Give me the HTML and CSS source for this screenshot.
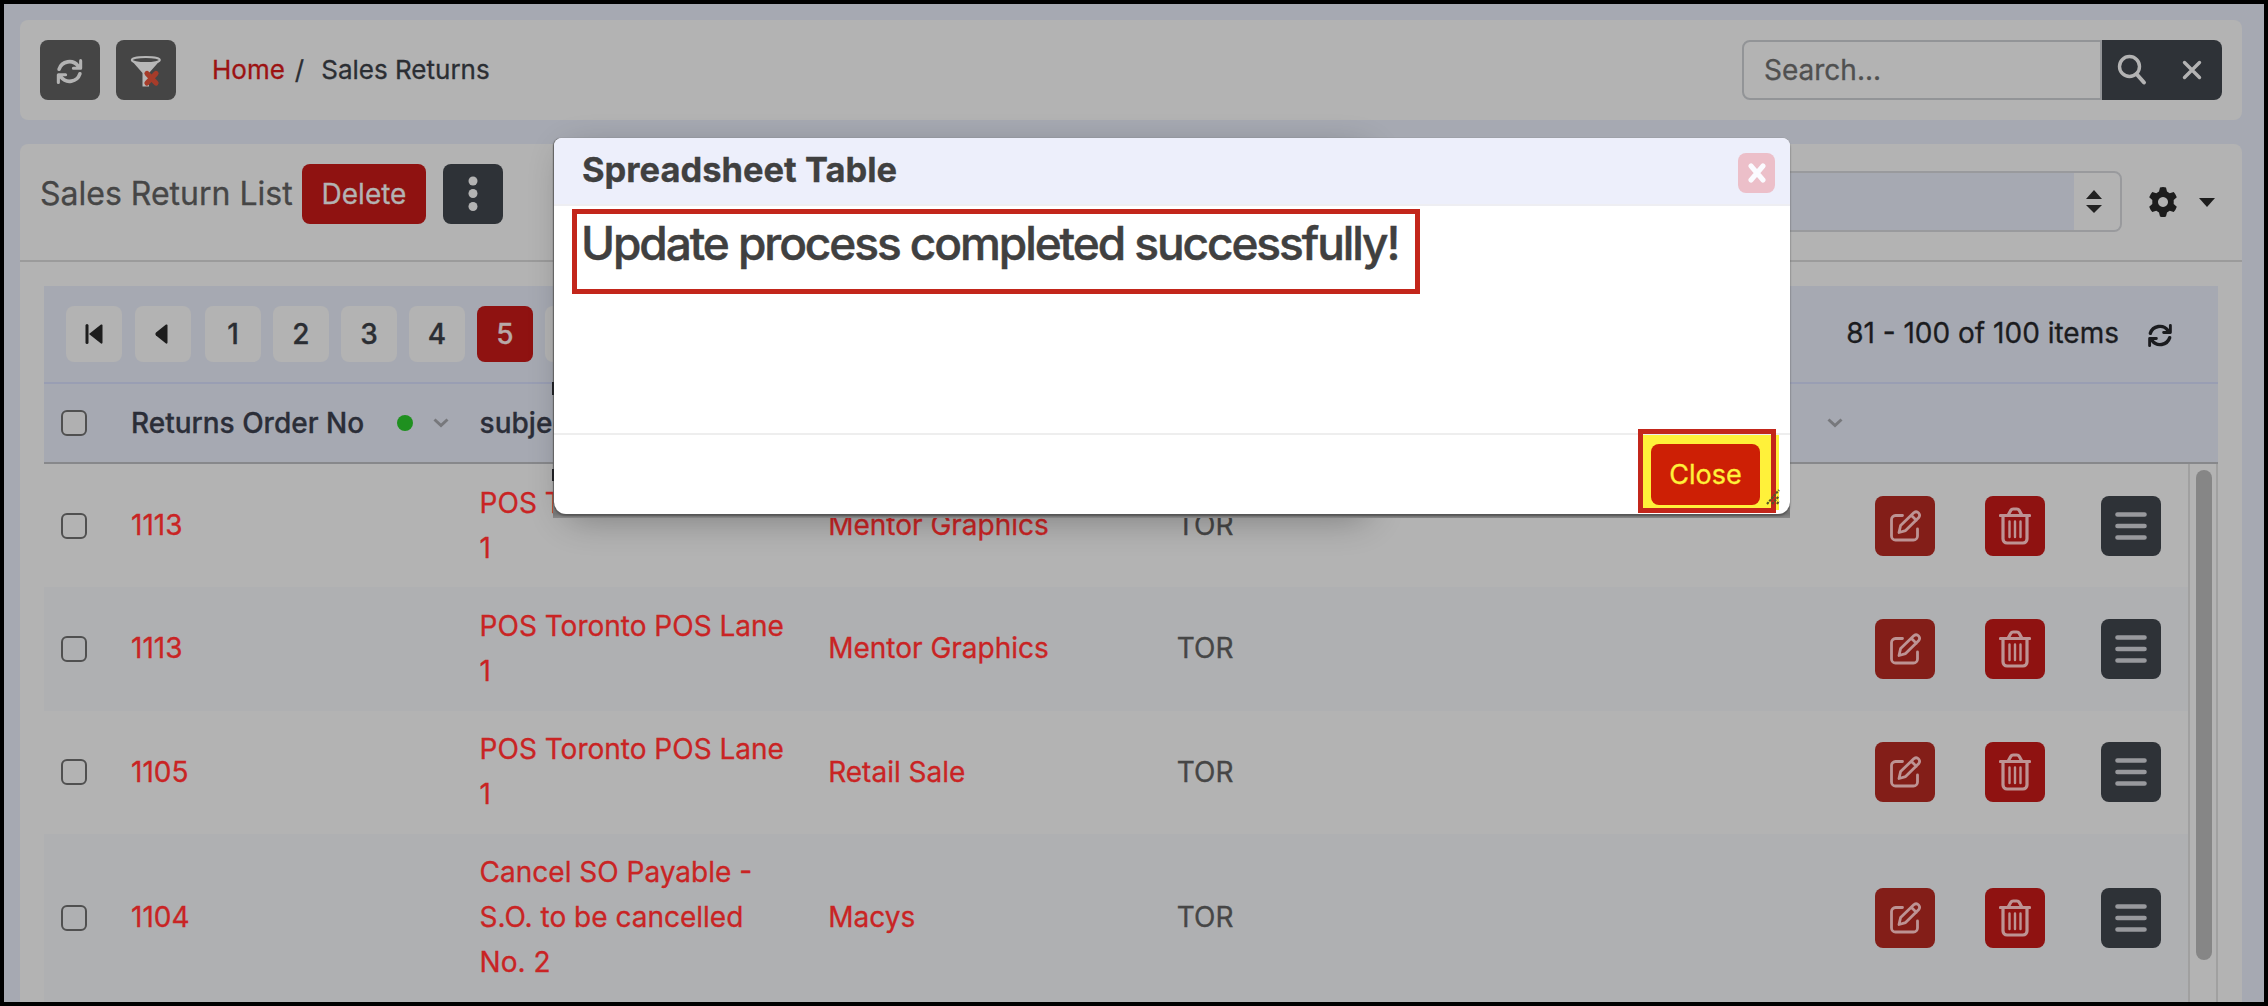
FILE: index.html
```html
<!DOCTYPE html>
<html lang="en">
<head>
<meta charset="utf-8">
<title>Sales Returns</title>
<link rel="stylesheet" href="styles.css">
</head>
<body>
<svg class="defs" width="0" height="0">
  <symbol id="sync" viewBox="0 0 32 32"><g fill="none" stroke="currentColor" stroke-width="4" stroke-linecap="round"><path d="M4.500 13.500A12 12 0 0 1 25.500 10M27.500 18.500A12 12 0 0 1 6.500 22"/></g><path fill="none" stroke="currentColor" stroke-width="3.400" stroke-linecap="round" stroke-linejoin="round" d="M28.300 4v8.500h-8M3.700 28v-8.500h8"/><path fill="currentColor" d="M28 7v5.500h-6zM4 25v-5.500h6z"/></symbol>
  <symbol id="chev" viewBox="0 0 16 10"><path d="M1.500 1.500 8 7.500l6.500-6" fill="none" stroke="currentColor" stroke-width="3"/></symbol>
  <symbol id="edit" viewBox="0 0 32 32"><g fill="none" stroke="currentColor" stroke-width="2.800" stroke-linecap="round" stroke-linejoin="round"><path d="M13.500 5.500H6.500a4 4 0 0 0-4 4V26a4 4 0 0 0 4 4h18a4 4 0 0 0 4-4v-7"/><path d="M10 22.500l1.600-7L25 2.600q2.500-1.800 4.500 0.300t.3 4.500L16.600 20.600zM22.500 5.600l4.800 4.600"/></g></symbol>
  <symbol id="bin" viewBox="0 0 32 38"><g fill="none" stroke="currentColor" stroke-width="3.200" stroke-linecap="round"><path d="M1.500 8.500h29M9.500 7.500l2.200-4q.8-1.500 2.500-1.500h3.600q1.700 0 2.500 1.500l2.200 4"/><path d="M4 9v23a4 4 0 0 0 4 4h16a4 4 0 0 0 4-4V9"/><path stroke-width="2.400" d="M10.500 14.500v15.500M16 14.500v15.500M21.500 14.500v15.500"/></g></symbol>
  <symbol id="menu" viewBox="0 0 32 30"><path d="M2.500 3.500h27M2.500 15h27M2.500 26.500h27" stroke="currentColor" stroke-width="4.600" stroke-linecap="round"/></symbol>
</svg>
<div class="screen">
  <header class="card topbar">
    <button class="btn gray"><svg width="29" height="29"><use href="#sync"/></svg></button>
    <button class="btn gray"><svg width="32" height="34" viewBox="0 0 32 34"><path d="M1.500 5.500 12.500 18v13.500h6.500V18L30 5.500" fill="#b7b7b7"/><ellipse cx="15.800" cy="5" rx="14" ry="3" fill="#454545" stroke="#b7b7b7" stroke-width="2"/><path d="m17 18.500 9 9.500m0-9.500-9 9.500" stroke="#a63c2a" stroke-width="5.200" stroke-linecap="round"/></svg></button>
    <nav class="crumbs"><a>Home</a><span class="slash">/</span><span>Sales Returns</span></nav>
    <div class="search"><div class="field">Search...</div>
      <button class="sbtn"><svg width="30" height="32" viewBox="0 0 30 32"><circle cx="12.500" cy="12.500" r="10" fill="none" stroke="currentColor" stroke-width="3.400"/><path d="m19.500 20 7.500 8.500" stroke="currentColor" stroke-width="4" stroke-linecap="round"/></svg></button>
      <button class="sbtn last"><svg width="20" height="20" viewBox="0 0 20 20"><path d="m2.500 2.500 15 15m0-15-15 15" stroke="currentColor" stroke-width="3.400" stroke-linecap="round"/></svg></button></div>
  </header>
  <main class="card list">
    <div class="listhead">
      <h1>Sales Return List</h1>
      <button class="btn delete">Delete</button>
      <button class="btn dark"><svg width="10" height="36" viewBox="0 0 10 36" fill="currentColor"><circle cx="5" cy="5" r="4.500"/><circle cx="5" cy="17.500" r="4.500"/><circle cx="5" cy="30.500" r="4.500"/></svg></button>
      <div class="select"><span class="arrows"><svg width="16" height="24" viewBox="0 0 16 24"><path d="M0 9 8 0l8 9zM0 15l8 8 8-8z" fill="#222"/></svg></span></div>
      <svg class="gear" width="30" height="32" viewBox="0 0 30 32"><path fill-rule="evenodd" fill="#1d1d1d" d="M12 1.500q3-1 6 0l1 4.100 2.700 1.600 4-1.300q2.200 2.300 3.100 5.300L25.700 14v4l3.100 2.800q-1 3-3.100 5.300l-4-1.300-2.700 1.600-1 4.100q-3 1-6 0l-1-4.100-2.700-1.600-4 1.300Q2.200 23.800 1.200 20.800L4.300 18v-4L1.200 11.200q1-3 3.100-5.300l4 1.300L11 5.600zM15 11a5 5 0 1 0 .01 0z"/></svg>
      <svg class="caret" width="16" height="9" viewBox="0 0 16 9"><path d="M0 0h16L8 9z" fill="#1d1d1d"/></svg>
    </div>
    <div class="body">
      <div class="grid">
        <div class="pager">
          <span class="pg first"><svg width="18" height="20" viewBox="0 0 18 20"><path d="M2 1.500v17" stroke="#1d1d1d" stroke-width="3" stroke-linecap="round"/><path d="M16 .5q1.500-.5 1.500 1v17q0 1.500-1.500 1L4 10z" fill="#1d1d1d"/></svg></span>
          <span class="pg prev"><svg width="13" height="20" viewBox="0 0 13 20"><path d="M11 .5q1.500-.5 1.500 1v17q0 1.500-1.500 1L1 11.500q-1.200-1.500 0-3z" fill="#1d1d1d"/></svg></span>
          <span class="pg">1</span><span class="pg">2</span><span class="pg">3</span><span class="pg">4</span><span class="pg on">5</span><span class="pg"></span>
          <span class="info">81 - 100 of 100 items</span>
          <svg class="reload" width="28" height="27"><use href="#sync"/></svg>
        </div>
        <div class="head"><span class="check"></span><span class="cell hd"><b>Returns Order No</b><i class="dot"></i><svg class="chev" width="16" height="10"><use href="#chev"/></svg></span><span class="cell"><b>subject</b></span><span class="cell"></span><span class="cell"></span><span class="cell hd"><svg class="chev" width="16" height="10"><use href="#chev"/></svg></span></div>
        <div class="scrollbox"><div class="rows">
          <div class="row"><span class="check"></span><a class="cell">1113</a><a class="cell">POS Toronto POS Lane 1</a><a class="cell">Mentor Graphics</a><span class="cell">TOR</span><span class="acts"><button class="btn edit"><svg width="32" height="32"><use href="#edit"/></svg></button><button class="btn bin"><svg width="32" height="38"><use href="#bin"/></svg></button><button class="btn dark"><svg width="32" height="30"><use href="#menu"/></svg></button></span></div>
          <div class="row"><span class="check"></span><a class="cell">1113</a><a class="cell">POS Toronto POS Lane 1</a><a class="cell">Mentor Graphics</a><span class="cell">TOR</span><span class="acts"><button class="btn edit"><svg width="32" height="32"><use href="#edit"/></svg></button><button class="btn bin"><svg width="32" height="38"><use href="#bin"/></svg></button><button class="btn dark"><svg width="32" height="30"><use href="#menu"/></svg></button></span></div>
          <div class="row"><span class="check"></span><a class="cell">1105</a><a class="cell">POS Toronto POS Lane 1</a><a class="cell">Retail Sale</a><span class="cell">TOR</span><span class="acts"><button class="btn edit"><svg width="32" height="32"><use href="#edit"/></svg></button><button class="btn bin"><svg width="32" height="38"><use href="#bin"/></svg></button><button class="btn dark"><svg width="32" height="30"><use href="#menu"/></svg></button></span></div>
          <div class="row"><span class="check"></span><a class="cell">1104</a><a class="cell">Cancel SO Payable - S.O. to be cancelled No. 2</a><a class="cell">Macys</a><span class="cell">TOR</span><span class="acts"><button class="btn edit"><svg width="32" height="32"><use href="#edit"/></svg></button><button class="btn bin"><svg width="32" height="38"><use href="#bin"/></svg></button><button class="btn dark"><svg width="32" height="30"><use href="#menu"/></svg></button></span></div>
        </div><div class="bar"><div class="thumb"></div></div></div>
      </div>
    </div>
  </main>
  <div class="shade"></div>
  <div class="backing"></div>
  <section class="modal">
    <div class="mhead"><h2>Spreadsheet Table</h2><button class="mx"><svg width="18" height="20" viewBox="0 0 18 20"><path d="m3 3 12 14M15 3 3 17" stroke="#fbfbff" stroke-width="5" stroke-linecap="round"/></svg></button></div>
    <div class="mbody"><p>Update process completed successfully!</p></div>
    <div class="mfoot"><div class="hl"><button class="close">Close</button></div></div>
    <div class="mark message-mark"></div>
    <div class="mark close-mark"></div>
    <svg class="grip" width="16" height="16" viewBox="0 0 16 16"><path d="M2 15 14 1M7 15l7-8M12 15l2-3" stroke="#55552a" stroke-width="2.200" stroke-dasharray="2.500 1"/></svg>
  </section>
  <div class="edge upper"></div>
  <div class="edge lower"></div>
</div>
</body>
</html>
```
FILE: styles.css
```css
* { box-sizing: border-box; }
body { margin: 0; font-family: Inter, "Liberation Sans", sans-serif; font-size: 28px; color: #2b2e33; -webkit-text-stroke: .3px; }
.defs { position: absolute; }
button { border: 0; padding: 0; font: inherit; color: inherit; }
svg { display: block; flex: none; }
.screen { position: relative; width: 2268px; height: 1006px; overflow: hidden; border: 4px solid #000; background: #a6a9b2; padding: 16px 22px 0 16px; }
.card { background: #b3b3b3; border-radius: 8px; }
.btn { width: 60px; height: 60px; border-radius: 8px; display: flex; align-items: center; justify-content: center; flex: none; color: #b3b3b3; }
.gray { background: #454545; }
.dark { background: #2e3237; }
.topbar { height: 100px; padding: 0 20px; display: flex; align-items: center; gap: 16px; }
.topbar .gray svg { margin: 3px 1px 0 0; }
.crumbs { display: flex; margin: 0 0 2px 20px; font-size: 26px; }
.crumbs a { color: #9c1212; }
.slash { margin: 0 17px 0 10px; }
.search { display: flex; margin-left: auto; width: 480px; height: 60px; }
.field { flex: 1; border: 2px solid #929497; border-radius: 8px 0 0 8px; padding-left: 20px; line-height: 56px; color: #505050; }
.sbtn { width: 60px; background: #2e3237; color: #b3b3b3; display: flex; align-items: center; justify-content: center; }
.last { border-radius: 0 8px 8px 0; }
.list { height: 900px; margin-top: 24px; }
.listhead { height: 118px; padding: 20px 0 0 20px; display: flex; border-bottom: 2px solid #9b9b9b; }
.listhead h1 { width: 262px; margin: 0; font-size: 32px; font-weight: 400; line-height: 59px; color: #464646; white-space: nowrap; }
.listhead .delete { width: 124px; background: #8f1211; margin-right: 17px; }
.select { width: 800px; height: 61px; margin: 7px 26px 0 auto; border: 2px solid #999a9d; border-radius: 8px; background: #a6a9b2; display: flex; justify-content: flex-end; overflow: hidden; }
.arrows { width: 46px; background: #b3b3b3; display: flex; align-items: center; padding: 0 0 0 12px; }
.gear { margin-top: 22px; }
.caret { margin: 34px 27px 0 21px; }
.body { padding: 24px 24px 0; }
.pager { height: 98px; padding: 0 43px 0 22px; background: #a6a9b2; border-bottom: 2px solid #999eb3; display: flex; align-items: center; gap: 12px; color: #1b1c1f; }
.pg { width: 56px; height: 56px; border-radius: 8px; background: #b3b3b3; display: flex; align-items: center; justify-content: center; font-weight: 500; color: #2b2e33; }
.first { margin-right: 1px; }
.prev { margin-right: 2px; padding-right: 4px; }
.on { background: #8f1211; color: #b8a8a8; }
.info { margin: 0 0 3px auto; }
.reload { margin: 2px 1px 0 15px; }
.row, .head { display: flex; align-items: center; }
.row { background: #b3b3b3; min-height: 123.300px; }
.row:nth-child(even) { background: #afb0b2; }
.row:last-child { min-height: 168px; }
.head { background: #a6a9b2; height: 80px; border-bottom: 2px solid #87888b; }
.check { width: 26px; height: 26px; margin: 0 31px 0 17px; border: 2px solid #505050; border-radius: 6px; flex: none; }
.head .check { background: #b0b0b1; }
.cell { width: 348.600px; padding: 0 26px 0 13px; line-height: 45px; color: #464646; flex: none; }
a.cell { color: #c92424; }
.cell b { font-weight: 500; color: #2b2e38; }
.hd { display: flex; align-items: center; padding-right: 18px; }
.dot { width: 16px; height: 16px; border-radius: 50%; background: #1f901f; margin: 0 20px 0 auto; }
.chev { color: #77787c; }
.hd .chev:only-child { margin-left: auto; }
.scrollbox { display: flex; height: 550px; }
.rows { width: 2144px; }
.acts { display: flex; margin-left: auto; padding-right: 27px; }
.edit { background: #831e18; margin-right: 50px; }
.bin { background: #8f1211; margin-right: 56px; }
.edit, .bin { color: #bd9393; }
.acts .dark { color: #98999d; }
.bar { width: 30px; border: solid #a0a0a0; border-width: 0 2px; padding: 6px; }
.thumb { width: 16px; height: 490px; border-radius: 8px; background: #868686; }
.shade { position: absolute; left: 562px; top: 140px; width: 802px; height: 366px; border-radius: 12px; box-shadow: 0 8px 36px rgba(0,0,0,.32); }
.backing { position: absolute; left: 549px; top: 500px; width: 1237px; height: 14px; background: linear-gradient(#888, #747474 70%, #888); }
.modal { position: absolute; left: 550px; top: 134px; width: 1236px; height: 376px; background: #fff; border-radius: 8px 8px 12px 12px; display: flex; flex-direction: column; color: #404040; box-shadow: 0 2px 2px #555, -1px 0 1px #666; }
.mhead { height: 68px; border-bottom: 2px solid #eeeef2; background: #edeffb; border-radius: 8px 8px 0 0; display: flex; justify-content: space-between; padding: 0 15px 0 28px; }
.mhead h2 { margin: 0; font-size: 34.500px; line-height: 63px; font-weight: 700; }
.mx { width: 37px; height: 40px; margin-top: 15px; border-radius: 8px; background: #ecbfc9; display: flex; align-items: center; justify-content: center; }
.mbody { flex: 1; padding-left: 27px; }
.mbody p { margin: 7px 0 0; font-size: 46px; line-height: 60px; font-weight: 500; letter-spacing: -2.080px; white-space: nowrap; -webkit-text-stroke: .5px; }
.mfoot { height: 81px; border-top: 2px solid #eee; padding-right: 11px; display: flex; justify-content: flex-end; }
.hl { width: 141px; height: 75px; background: #fff13a; padding: 9px 0 0 13px; }
.close { width: 109px; height: 61px; background: #cd1f05; color: #fff13a; border-radius: 8px; font-size: 27px; }
.grip { position: absolute; right: 9px; bottom: 9px; }
.mark { position: absolute; border: 5px solid #c3261b; }
.message-mark { left: 18px; top: 71px; width: 848px; height: 85px; }
.close-mark { left: 1084px; top: 291px; width: 138px; height: 84px; }
.edge { position: absolute; left: 548px; width: 2px; background: #1e1f22; }
.upper { top: 378px; height: 13px; }
.lower { top: 465px; height: 12px; }
```
